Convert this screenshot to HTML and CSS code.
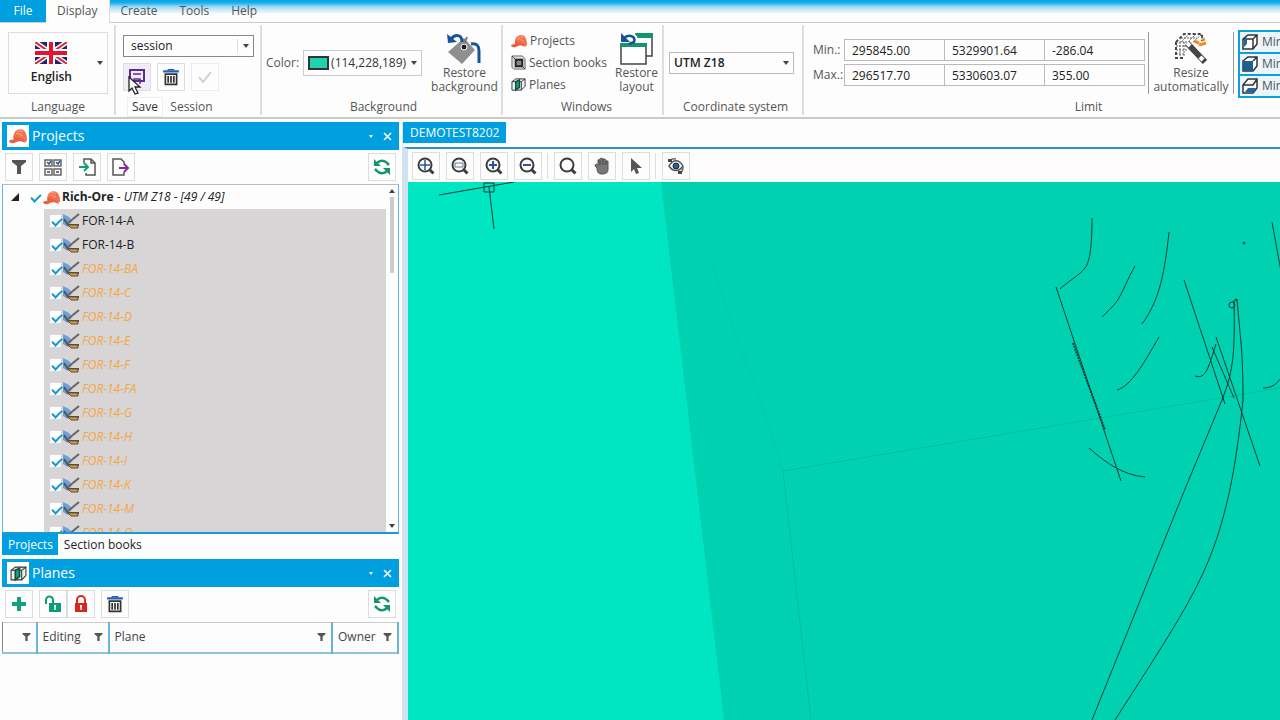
FILE: index.html
```html
<!DOCTYPE html>
<html lang="en">
<head>
    <meta charset="UTF-8">
    <meta name="viewport" content="width=device-width, initial-scale=1.0">
    <title>DEMOTEST8202</title>
    <link rel="stylesheet" href="styles.css">
</head>
<body>

    <!-- Shared icons -->
    <svg class="sprite" aria-hidden="true">
        <symbol id="i-helmet" viewBox="0 0 16 14">
            <path d="M4 8C4 3 7 1 10 1c4 0 6 4 6 10l-1 1-3-1z" fill="#f4714e"/>
            <path d="M4 7l9 3 2 3-3-1c-3-1-5 0-7 1-2 1-4 0-5-1 0-1 1-2 4-2z" fill="#e8603f"/>
            <path d="M7 3c2-1 4-1 5 1M6 5c2-1 4 0 6 2" stroke="#fba285" fill="none"/>
        </symbol>
        <symbol id="i-section" viewBox="0 0 16 16">
            <path d="M1 1h11l3 3v11H3L1 13z" fill="#ddd" stroke="#666"/>
            <path d="M5 5h7v7H5z" fill="#888" stroke="#222" stroke-width="2"/>
            <path d="M1 1l4 4M15 15l-3-3" stroke="#444"/>
        </symbol>
        <symbol id="i-cube" viewBox="0 0 16 16">
            <path d="M1 5l4-3h10v8l-4 4H1z" fill="#e6f3ef" stroke="#333"/>
            <path d="M1 5h10v9M11 5l4-3" fill="none" stroke="#333"/>
            <path d="M5 5l4-2v8l-4 3z" fill="#12a382" stroke="#17493e" stroke-width="1.500"/>
        </symbol>
        <symbol id="i-funnel" viewBox="0 0 16 16">
            <path d="M1 1h14v2l-5 4v8H6V7L1 3z" fill="#555"/>
        </symbol>
        <symbol id="i-check-grid" viewBox="0 0 18 18">
            <path d="M1 2h7v6H1zM10 2h7v6h-7zM1 11h7v6H1zM10 11h7v6h-7z" fill="#fff" stroke="#666" stroke-width="1.500"/>
            <path d="M3 4l2 2 2-3M12 4l2 2 2-3" fill="none" stroke="#235a9c" stroke-width="1.500"/>
            <path d="M3 14h3M12 14h3" stroke="#444" stroke-width="1.500"/>
        </symbol>
        <symbol id="i-import" viewBox="0 0 18 18">
            <path d="M6 5V1h7l4 4v12H8v-2M13 1v4h4" fill="none" stroke="#555" stroke-width="1.500"/>
            <path d="M1 9h8M6 5l4 4-4 4" fill="none" stroke="#119c79" stroke-width="2"/>
        </symbol>
        <symbol id="i-export" viewBox="0 0 18 18">
            <path d="M12 6V4L9 1H1v16h11v-3" fill="none" stroke="#555" stroke-width="1.500"/>
            <path d="M7 10h9M12 6l4 4-4 4" fill="none" stroke="#862a96" stroke-width="2"/>
        </symbol>
        <symbol id="i-refresh" viewBox="0 0 18 18">
            <path d="M3 7a6.500 6.500 0 0 1 11-2l2 2M15 11a6.500 6.500 0 0 1-11 2l-2-2" fill="none" stroke="#14956f" stroke-width="2.500"/>
            <path d="M1 1v7h7zM17 17v-7h-7z" fill="#14956f"/>
        </symbol>
        <symbol id="i-plus" viewBox="0 0 16 16">
            <path d="M8 1v14M1 8h14" stroke="#14a07c" stroke-width="4"/>
        </symbol>
        <symbol id="i-unlock" viewBox="0 0 18 18">
            <path d="M2 9V5a3.500 3.500 0 0 1 7 0v4" fill="none" stroke="#119c79" stroke-width="2"/>
            <path d="M5 8h12v9H5z" fill="#119c79"/>
            <path d="M11 10v5M10 11h2" stroke="#fff" stroke-width="1.500"/>
        </symbol>
        <symbol id="i-lock" viewBox="0 0 18 18">
            <path d="M5 9V5a4 4 0 0 1 8 0v4" fill="none" stroke="#d6281f" stroke-width="2"/>
            <path d="M3 8h12v9H3z" fill="#d6281f"/>
            <path d="M9 10v5M8 11h2" stroke="#fff" stroke-width="1.500"/>
        </symbol>
        <symbol id="i-trash" viewBox="0 0 16 16">
            <path d="M1 3h14" stroke="#1d63b5" stroke-width="2"/>
            <path d="M5 1.500h6" stroke="#1d3f8c"/>
            <path d="M3 5.500h10v9H3zM5.500 7v6M8 7v6M10.500 7v6" fill="none" stroke="#333" stroke-width="1.500"/>
        </symbol>
        <symbol id="i-lens" viewBox="0 0 18 18">
            <circle cx="8" cy="8" r="6.500" fill="none" stroke="#3c3c3c" stroke-width="2"/>
            <path d="M12.500 12.500l4 4" stroke="#3c3c3c" stroke-width="3"/>
        </symbol>
        <symbol id="i-drill" viewBox="0 0 18 18">
            <path d="M1 2l6 3 3 4-4 6-5-3z" fill="#6f9fdb"/>
            <path d="M17 2L6 11" stroke="#666" stroke-width="2"/>
            <path d="M2 7l4 6h11" fill="none" stroke="#555" stroke-width="2"/>
            <path d="M6 13h10v3H9z" fill="#d0a24a" stroke="#5c4a2c"/>
        </symbol>
    </svg>

    <nav class="tabs">
        <a class="tab file" href="#">File</a>
        <a class="tab active" href="#">Display</a>
        <a class="tab" href="#">Create</a>
        <a class="tab" href="#">Tools</a>
        <a class="tab" href="#">Help</a>
    </nav>

    <header class="ribbon">
        <section class="group language">
            <div class="group-body">
                <button class="lang-btn">
                    <span class="lang-name">
                        <svg width="32" height="22" viewBox="0 0 32 22">
                            <path d="M0 0h32v22H0z" fill="#22256e"/>
                            <path d="M0 0l32 22M32 0L0 22" stroke="#fff" stroke-width="5"/>
                            <path d="M0 0l32 22M32 0L0 22" stroke="#e0233c" stroke-width="2"/>
                            <path d="M16 0v22M0 11h32" stroke="#fff" stroke-width="8"/>
                            <path d="M16 0v22M0 11h32" stroke="#e3142c" stroke-width="4"/>
                        </svg>
                        English
                    </span>
                    <span class="caret"></span>
                </button>
            </div>
            <h2>Language</h2>
        </section>

        <section class="group session">
            <div class="group-body stack">
                <div class="select split">
                    <select aria-label="Session"><option>session</option></select>
                    <span class="caret"></span>
                </div>
                <div class="session-buttons">
                    <button class="tool hover save" aria-label="Save">
                        <svg width="18" height="18" viewBox="0 0 18 18">
                            <path d="M2 2h14v11H2z" fill="#f4eef9" stroke="#5b2d94" stroke-width="2"/>
                            <path d="M5 6h8M6 16v-5h6v5" fill="none" stroke="#5b2d94" stroke-width="1.500"/>
                        </svg>
                        <svg class="cursor" width="15" height="20" viewBox="0 0 15 20">
                            <path d="M1 1v14l3-3 3 6 3-1-3-6h5z" fill="#fff" stroke="#222" stroke-width="1.300"/>
                        </svg>
                        <span class="tooltip">Save</span>
                    </button>
                    <button class="tool" aria-label="Delete"><svg width="18" height="18"><use href="#i-trash"/></svg></button>
                    <button class="tool faint" aria-label="Apply" disabled>
                        <svg width="16" height="16" viewBox="0 0 16 16"><path d="M2 8l4 5 8-10" fill="none" stroke="#c3d3cf" stroke-width="2"/></svg>
                    </button>
                </div>
            </div>
            <h2>Session</h2>
        </section>

        <section class="group background">
            <div class="group-body">
                <span class="label">Color:</span>
                <button class="color-btn"><span class="swatch"></span>(114,228,189)<span class="caret"></span></button>
                <button class="big-btn">
                    <svg width="36" height="34" viewBox="0 0 36 34">
                        <path d="M2 20L18 6l11 12-13 14z" fill="#8f8f8f"/>
                        <path d="M17 15L21 5" stroke="#777" stroke-width="2"/>
                        <circle cx="18" cy="15" r="3" fill="#222" stroke="#fff"/>
                        <path d="M25 12c6-1 8 2 8 7v12" fill="none" stroke="#16539b" stroke-width="3"/>
                        <path d="M5 7c4-5 11-5 11 3" fill="none" stroke="#16539b" stroke-width="3"/>
                        <path d="M1 2l1 9 9-1z" fill="#16539b"/>
                    </svg>
                    <span>Restore<br>background</span>
                </button>
            </div>
            <h2>Background</h2>
        </section>

        <section class="group windows">
            <div class="group-body">
                <div class="window-list">
                    <button><svg width="16" height="14"><use href="#i-helmet"/></svg>Projects</button>
                    <button><svg width="15" height="15"><use href="#i-section"/></svg>Section books</button>
                    <button><svg width="15" height="15"><use href="#i-cube"/></svg>Planes</button>
                </div>
                <button class="big-btn">
                    <svg width="36" height="34" viewBox="0 0 36 34">
                        <path d="M16 2h17v22h-6" fill="#fff" stroke="#444" stroke-width="1.500"/>
                        <path d="M17 1h17v5H17z" fill="#14956f"/>
                        <path d="M2 12h25v20H2z" fill="#fff" stroke="#444" stroke-width="1.500"/>
                        <path d="M1 11h27v4H1z" fill="#14956f"/>
                        <path d="M5 6c5-4 12-2 11 4" fill="none" stroke="#fff" stroke-width="6"/>
                        <path d="M5 6c5-4 12-2 10 4l-5 2" fill="none" stroke="#16539b" stroke-width="2.500"/>
                        <path d="M2 1v9h9z" fill="#16539b"/>
                    </svg>
                    <span>Restore<br>layout</span>
                </button>
            </div>
            <h2>Windows</h2>
        </section>

        <section class="group coordinates">
            <div class="group-body">
                <div class="select">
                    <select aria-label="Coordinate system"><option>UTM Z18</option></select>
                    <span class="caret"></span>
                </div>
            </div>
            <h2>Coordinate system</h2>
        </section>

        <section class="group limit">
            <div class="group-body">
                <div class="limits">
                    <div class="limit-row">
                        <span class="label">Min.:</span>
                        <input type="text" value="295845.00" aria-label="Min X">
                        <input type="text" value="5329901.64" aria-label="Min Y">
                        <input type="text" value="-286.04" aria-label="Min Z">
                    </div>
                    <div class="limit-row">
                        <span class="label">Max.:</span>
                        <input type="text" value="296517.70" aria-label="Max X">
                        <input type="text" value="5330603.07" aria-label="Max Y">
                        <input type="text" value="355.00" aria-label="Max Z">
                    </div>
                </div>
                <div class="resize">
                    <button class="big-btn">
                        <svg width="34" height="34" viewBox="0 0 34 34">
                            <path d="M2 10l8-8h18v7M2 10v16h8" fill="none" stroke="#444" stroke-width="2" stroke-dasharray="3 2"/>
                            <path d="M2 10h12M19 10l9-8M2 18h12M10 10v15M7 6h16M15 2l-8 8M22 2l-8 8M6 10v14M2 14h12M2 22h9" fill="none" stroke="#666" stroke-dasharray="2 1"/>
                            <path d="M13 11l18 19" stroke="#444" stroke-width="6"/>
                            <path d="M13 11l3 3M26 25l3 3" stroke="#fff" stroke-width="4"/>
                            <path d="M20 9l5 2M25 13l7-2M28 8l3-1" stroke="#f08a2c" stroke-width="3"/>
                        </svg>
                        <span>Resize<br>automatically</span>
                    </button>
                </div>
                <div class="faces">
                    <button><svg width="16" height="16" viewBox="0 0 16 16"><path d="M1 5l5-4h9v9l-4 5H1zM1 5h10v10M11 5l4-4" fill="#fff" stroke="#333" stroke-width="1.500"/><path d="M2 6l3-3v7l-3 3z" fill="#1c66ab"/></svg>Min. X</button>
                    <button><svg width="16" height="16" viewBox="0 0 16 16"><path d="M1 5l5-4h9v9l-4 5H1zM11 5l4-4" fill="#fff" stroke="#333" stroke-width="1.500"/><path d="M1 5h10v10H1z" fill="#1c5f94"/></svg>Min. Y</button>
                    <button><svg width="16" height="16" viewBox="0 0 16 16"><path d="M1 7l5-6h9v9l-4 5H1zM1 7h10l4-6" fill="#fff" stroke="#333" stroke-width="1.500"/><path d="M3 14l3-4h8l-3 4z" fill="#1c66ab"/></svg>Min. Z</button>
                </div>
            </div>
            <h2>Limit</h2>
        </section>
    </header>

    <main class="workspace">
        <aside class="sidebar">
            <section class="panel projects">
                <div class="panel-title">
                    <span class="title-icon"><svg width="18" height="16"><use href="#i-helmet"/></svg></span>
                    <h3>Projects</h3>
                    <button class="title-btn" aria-label="Options"><span class="caret"></span></button>
                    <button class="title-btn" aria-label="Close"><svg width="9" height="9" viewBox="0 0 9 9"><path d="M1 1l7 7M8 1L1 8" stroke="#fff" stroke-width="1.500"/></svg></button>
                </div>
                <div class="toolbar">
                    <button class="tool" aria-label="Filter"><svg width="16" height="16"><use href="#i-funnel"/></svg></button>
                    <button class="tool" aria-label="Check all"><svg width="18" height="18"><use href="#i-check-grid"/></svg></button>
                    <button class="tool" aria-label="Import"><svg width="18" height="18"><use href="#i-import"/></svg></button>
                    <button class="tool" aria-label="Export"><svg width="18" height="18"><use href="#i-export"/></svg></button>
                    <button class="tool right" aria-label="Refresh"><svg width="18" height="18"><use href="#i-refresh"/></svg></button>
                </div>
                <div class="tree">
                    <div class="tree-view">
                        <label class="tree-root">
                            <svg width="8" height="8" viewBox="0 0 8 8"><path d="M8 0v8H0z" fill="#222"/></svg>
                            <input type="checkbox" checked>
                            <svg width="17" height="15"><use href="#i-helmet"/></svg>
                            <span><b>Rich-Ore</b> - <i>UTM Z18 - [49 / 49]</i></span>
                        </label>
                        <div id="holes"></div>
                    </div>
                    <div class="scrollbar">
                        <span class="caret up"></span>
                        <span class="thumb"></span>
                        <span class="caret"></span>
                    </div>
                </div>
                <div class="panel-tabs">
                    <a class="active" href="#">Projects</a>
                    <a href="#">Section books</a>
                </div>
            </section>

            <section class="panel planes">
                <div class="panel-title">
                    <span class="title-icon"><svg width="17" height="17"><use href="#i-cube"/></svg></span>
                    <h3>Planes</h3>
                    <button class="title-btn" aria-label="Options"><span class="caret"></span></button>
                    <button class="title-btn" aria-label="Close"><svg width="9" height="9" viewBox="0 0 9 9"><path d="M1 1l7 7M8 1L1 8" stroke="#fff" stroke-width="1.500"/></svg></button>
                </div>
                <div class="toolbar">
                    <button class="tool" aria-label="Add"><svg width="16" height="16"><use href="#i-plus"/></svg></button>
                    <div class="pair">
                        <button class="tool" aria-label="Unlock"><svg width="18" height="18"><use href="#i-unlock"/></svg></button>
                        <button class="tool" aria-label="Lock"><svg width="18" height="18"><use href="#i-lock"/></svg></button>
                    </div>
                    <button class="tool" aria-label="Delete"><svg width="18" height="18"><use href="#i-trash"/></svg></button>
                    <button class="tool right" aria-label="Refresh"><svg width="18" height="18"><use href="#i-refresh"/></svg></button>
                </div>
                <table>
                    <thead>
                        <tr>
                            <th class="col-mark"><div><span></span><svg width="9" height="10"><use href="#i-funnel"/></svg></div></th>
                            <th class="col-editing"><div>Editing<svg width="9" height="10"><use href="#i-funnel"/></svg></div></th>
                            <th><div>Plane<svg width="9" height="10"><use href="#i-funnel"/></svg></div></th>
                            <th class="col-owner"><div>Owner<svg width="9" height="10"><use href="#i-funnel"/></svg></div></th>
                        </tr>
                    </thead>
                </table>
            </section>
        </aside>

        <section class="document">
            <div class="doc-tabs"><a href="#">DEMOTEST8202</a></div>
            <div class="viewer">
                <div class="toolbar">
                    <button class="tool" aria-label="Zoom extents"><svg width="18" height="18"><use href="#i-lens"/><path d="M8 3v10M3 8h10" stroke="#2a559c" stroke-width="1.500"/></svg></button>
                    <button class="tool" aria-label="Zoom window"><svg width="18" height="18"><use href="#i-lens"/><path d="M4 6h8v4H4z" fill="none" stroke="#62789c"/></svg></button>
                    <button class="tool" aria-label="Zoom in"><svg width="18" height="18"><use href="#i-lens"/><path d="M8 4v8M4 8h8" stroke="#2a559c" stroke-width="2"/></svg></button>
                    <button class="tool" aria-label="Zoom out"><svg width="18" height="18"><use href="#i-lens"/><path d="M4 8h8" stroke="#2a559c" stroke-width="2"/></svg></button>
                    <span class="divider"></span>
                    <button class="tool" aria-label="Zoom"><svg width="18" height="18"><use href="#i-lens"/></svg></button>
                    <button class="tool" aria-label="Pan">
                        <svg width="16" height="18" viewBox="0 0 16 18"><path d="M3 11L1 9l1-2 2 1V3l2-1 1-1 2 1 2 0 1 2 2 0v8c0 4-2 5-6 5s-5-2-5-6z" fill="#777" stroke="#555"/><path d="M6 3v5M9 2v6M12 4v4" stroke="#444"/></svg>
                    </button>
                    <button class="tool" aria-label="Select">
                        <svg width="14" height="18" viewBox="0 0 14 18"><path d="M2 1v14l3-3 2 5 3-1-2-5h5z" fill="#555"/></svg>
                    </button>
                    <span class="divider"></span>
                    <button class="tool" aria-label="Orbit">
                        <svg width="18" height="18" viewBox="0 0 18 18">
                            <path d="M2 9c4-7 10-7 14 0-4 6-10 6-14 0z" fill="none" stroke="#555" stroke-width="1.500"/>
                            <circle cx="9" cy="9" r="3" fill="#25609c" stroke="#222"/>
                            <path d="M2 4c2-2 4-3 7-2M16 10c0 3-1 5-3 6" fill="none" stroke="#666" stroke-width="1.500"/>
                            <path d="M1 2h4v3H1zM11 14h4v3h-4z" fill="#444"/>
                        </svg>
                    </button>
                </div>

                <svg class="scene" viewBox="408 182 872 538" preserveAspectRatio="xMinYMin slice">
                    <path d="M661 182H1280V720H724z" fill="#00d2b1"/>
                    <g class="edges">
                        <path d="M783 471L1280 388"/>
                        <path d="M783 471L811 720"/>
                        <path d="M712 262L783 471" opacity="0.400"/>
                    </g>
                    <g class="holes">
                        <!-- origin marker -->
                        <path d="M439 195L514 182M489 187L494 229M484 183h10v9h-10z"/>
                        <!-- drill holes -->
                        <path d="M1092 218C1092 245 1090 262 1085 268C1080 275 1067 282 1060 289"/>
                        <path d="M1056 287L1121 481"/>
                        <path d="M1073 343L1105 430" stroke-width="2" stroke-dasharray="2 1"/>
                        <path d="M1135 266C1128 278 1122 294 1117 301C1112 308 1107 312 1102 317"/>
                        <path d="M1169 232C1165 270 1160 300 1142 324"/>
                        <path d="M1159 337C1144 363 1131 386 1117 390"/>
                        <path d="M1089 448C1105 462 1122 475 1145 477"/>
                        <path d="M1184 280L1225 404"/>
                        <path d="M1216 337L1260 466"/>
                        <path d="M1212 347L1234 398"/>
                        <path d="M1216 344C1209 366 1206 380 1195 376"/>
                        <path d="M1234 300C1235 350 1234 370 1222 400L1185 489L1092 720"/>
                        <path d="M1237 299C1240 335 1243 350 1243 400C1240 430 1235 465 1230 489C1212 572 1190 603 1115 720"/>
                        <path d="M1272 222L1282 277"/>
                        <path d="M1263 388C1273 388 1276 384 1282 377"/>
                        <circle cx="1232" cy="305" r="3"/>
                        <circle cx="1236" cy="300" r="1"/>
                        <circle cx="1244" cy="243" r="1"/>
                    </g>
                </svg>
            </div>
        </section>
    </main>

    <script>
        const holes = ['A', 'B', 'BA', 'C', 'D', 'E', 'F', 'FA', 'G', 'H', 'I', 'K', 'M', 'O'];
        const loaded = ['A', 'B'];

        // Fill the project tree
        const list = document.getElementById('holes');
        holes.forEach(hole => {
            const row = document.createElement('label');
            row.className = loaded.includes(hole) ? 'hole' : 'hole pending';
            row.innerHTML = `
                <input type="checkbox" checked>
                <svg width="18" height="18"><use href="#i-drill"/></svg>
                <span>FOR-14-${hole}</span>
            `;
            list.appendChild(row);
        });
    </script>

</body>
</html>
```

FILE: styles.css
```css
* {
    box-sizing: border-box;
}

body {
    margin: 0;
    height: 100vh;
    display: flex;
    flex-direction: column;
    overflow: hidden;
    background-color: #fdfdfd;
    font-family: "Open Sans", "Noto Sans", sans-serif;
    font-size: 12px;
    line-height: 14px;
    color: #555;
}

button, input, select {
    font: inherit;
    color: inherit;
}

button {
    display: flex;
    align-items: center;
    justify-content: center;
    padding: 0;
    border: none;
    background: none;
}

a {
    color: inherit;
    text-decoration: none;
}

h2, h3 {
    margin: 0;
    font-size: 12px;
    font-weight: normal;
    text-align: center;
}

svg {
    flex: none;
}

.sprite {
    position: absolute;
    width: 0;
    height: 0;
}

.caret {
    flex: none;
    width: 0;
    border: 3px solid transparent;
    border-top: 4px solid #444;
    border-bottom: none;
}

.caret.up {
    border-top: none;
    border-bottom: 4px solid #444;
}

/* Ribbon */

.tabs {
    display: flex;
    flex: none;
    height: 23px;
    background: linear-gradient(#00a6e8 0, #1fb0ea 3px, #a5dcf5 7px, #fdfdfd 14px);
    border-bottom: 1px solid #ccc;
}

.tab {
    padding: 4px 11px;
}

.tab.file {
    width: 46px;
    padding: 4px 0;
    text-align: center;
    color: #fff;
    background-color: #009fe0;
}

.tab.active {
    height: 23px;
    background-color: #fdfdfd;
    border-right: 1px solid #ddd;
}

.ribbon {
    display: flex;
    flex: none;
    height: 96px;
    padding: 2px 0;
    overflow: hidden;
    border-bottom: 2px solid #c9c9c9;
}

.group {
    display: flex;
    flex-direction: column;
    flex: none;
    border-right: 2px solid #ddd;
}

.group h2 {
    height: 15px;
}

.group-body {
    display: flex;
    align-items: center;
    flex: 1;
}

.language {
    width: 116px;
    padding: 0 6px 0 8px;
}

.session {
    width: 146px;
    padding-left: 7px;
}

.background {
    width: 241px;
    padding-left: 4px;
}

.windows {
    width: 161px;
    padding-left: 8px;
}

.coordinates {
    width: 140px;
    padding-left: 5px;
}

.limit {
    width: 562px;
    padding-left: 9px;
}

.lang-btn {
    width: 100px;
    height: 62px;
    justify-content: flex-end;
    gap: 25px;
    padding-right: 4px;
    border: 1px solid #ddd;
    font-weight: 600;
    color: #222;
}

.lang-name {
    display: flex;
    flex-direction: column;
    align-items: center;
    gap: 6px;
}

.stack {
    flex-direction: column;
    align-items: flex-start;
    justify-content: center;
    gap: 6px;
}

.select {
    display: flex;
    align-items: center;
    width: 125px;
    height: 22px;
    padding-right: 4px;
    border: 1px solid #bbb;
    font-weight: 600;
    color: #222;
}

.select select {
    flex: 1;
    padding: 0 4px;
    border: none;
    background: none;
    appearance: none;
}

.select.split {
    width: 131px;
    border-color: #888;
    font-weight: 500;
}

.split select {
    margin-right: 5px;
    padding-left: 7px;
    border-right: 1px solid #ddd;
}

.session-buttons {
    display: flex;
    gap: 6px;
}

.tool {
    width: 28px;
    height: 28px;
    border: 1px solid #ddd;
}

.tool.hover {
    background-color: #f1ecf6;
}

.tool.faint {
    border-color: #eee;
}

.save {
    position: relative;
}

.cursor {
    position: absolute;
    left: 4px;
    top: 12px;
}

.tooltip {
    position: absolute;
    left: 3px;
    top: 33px;
    padding: 2px 4px;
    background-color: #fff;
    border: 1px solid #eee;
    color: #333;
}

.color-btn {
    width: 119px;
    height: 26px;
    justify-content: flex-start;
    gap: 2px;
    margin: 0 9px 0 4px;
    padding: 0 4px;
    border: 1px solid #ccc;
    color: #333;
}

.color-btn .caret {
    margin-left: auto;
}

.swatch {
    width: 21px;
    height: 14px;
    background-color: #1fd3ac;
    border: 2px solid #333;
}

.big-btn {
    flex-direction: column;
}

.window-list {
    display: flex;
    flex-direction: column;
    width: 104px;
    gap: 8px;
}

.window-list button {
    justify-content: flex-start;
    gap: 3px;
    height: 14px;
}

.limits {
    display: flex;
    flex-direction: column;
    gap: 3px;
}

.limit-row {
    display: flex;
    align-items: center;
}

.limit-row .label {
    width: 31px;
}

.limit-row input {
    width: 101px;
    height: 22px;
    margin-right: -1px;
    padding: 0 7px;
    border: 1px solid #bbb;
    background: none;
    color: #222;
}

.resize {
    display: flex;
    justify-content: center;
    width: 86px;
    margin-left: 4px;
    border: solid #999;
    border-width: 0 1px;
}

.faces {
    width: 124px;
    padding-left: 4px;
}

.faces button {
    width: 100%;
    height: 24px;
    margin-bottom: -2px;
    justify-content: flex-start;
    gap: 4px;
    padding-left: 2px;
    border: 2px solid #0fa0dc;
    background-color: #eaf6fc;
}

/* Workspace */

.workspace {
    display: flex;
    flex: 1;
    min-height: 0;
    padding-top: 3px;
}

.sidebar {
    display: grid;
    grid-template-rows: 1fr 161px;
    gap: 4px;
    flex: none;
    width: 403px;
    padding: 0 3px 0 2px;
    border-right: 1px solid #cfe4f2;
}

.panel {
    display: flex;
    flex-direction: column;
    min-height: 0;
}

.panel-title {
    display: flex;
    align-items: center;
    flex: none;
    height: 28px;
    padding: 0 4px 0 5px;
    background-color: #009fe0;
    color: #fff;
}

.title-icon {
    display: flex;
    align-items: center;
    justify-content: center;
    width: 22px;
    height: 22px;
    background-color: #fff;
}

.panel-title h3 {
    flex: 1;
    padding-left: 3px;
    font-size: 14px;
    text-align: left;
}

.title-btn {
    width: 16px;
    height: 16px;
}

.title-btn .caret {
    border-width: 3px 2px 0;
    border-top-color: #fff;
}

.toolbar {
    display: flex;
    align-items: center;
    flex: none;
    gap: 6px;
    height: 33px;
    padding: 0 3px;
}

.toolbar .right {
    margin-left: auto;
}

.pair {
    display: flex;
}

.tree {
    display: flex;
    flex: 1;
    min-height: 0;
    margin-top: 1px;
    border: 1px solid #5cb8e0;
    border-top-color: #bbb;
    border-bottom: 2px solid #179bd0;
    color: #222;
}

.tree-view {
    flex: 1;
    overflow: hidden;
}

.tree input {
    flex: none;
    position: relative;
    width: 11px;
    height: 12px;
    margin: 0;
    background-color: #fff;
    appearance: none;
}

.tree input:checked::before {
    content: "";
    position: absolute;
    left: 4px;
    top: 1px;
    width: 4px;
    height: 8px;
    border: solid #149bc8;
    border-width: 0 2px 2px 0;
    transform: rotate(45deg);
}

.tree-root {
    display: flex;
    align-items: center;
    height: 24px;
    padding-left: 8px;
}

.tree-root input {
    margin: 0 3px 0 10px;
}

.tree-root span {
    padding-left: 2px;
}

#holes {
    margin-left: 41px;
    background-color: #d8d5d6;
}

.hole {
    display: flex;
    align-items: center;
    height: 24px;
    padding-left: 6px;
}

.hole svg {
    margin-left: 1px;
}

.hole span {
    padding-left: 2px;
}

.hole.pending {
    font-style: italic;
    color: #f5a742;
}

.scrollbar {
    display: flex;
    flex-direction: column;
    align-items: center;
    width: 12px;
    padding: 4px 0;
}

.thumb {
    width: 4px;
    height: 76px;
    margin: 4px 0 auto;
    background-color: #ccc;
}

.panel-tabs {
    display: flex;
    flex: none;
    height: 21px;
    color: #222;
}

.panel-tabs a {
    padding: 4px 5px 3px 6px;
    font-weight: 500;
}

.panel-tabs .active {
    background-color: #009fe0;
    color: #fff;
}

.planes table {
    width: 100%;
    table-layout: fixed;
    border-collapse: collapse;
    margin-top: 2px;
    border-top: 1px solid #ccc;
    border-bottom: 2px solid #8fc3dd;
}

.planes th {
    height: 30px;
    padding: 0 5px;
    border-right: 2px solid #6ab4d9;
    font-weight: normal;
    color: #444;
}

.planes th div {
    display: flex;
    align-items: center;
    justify-content: space-between;
}

.col-mark {
    width: 34px;
    border-left: 1px solid #888;
}

.col-editing {
    width: 72px;
}

.col-owner {
    width: 66px;
}

/* Document */

.document {
    display: flex;
    flex-direction: column;
    flex: 1;
    min-width: 0;
}

.doc-tabs {
    display: flex;
    flex: none;
    height: 25px;
    padding-bottom: 4px;
}

.doc-tabs a {
    padding: 4px 7px 3px;
    background-color: #009fe0;
    color: #fff;
}

.viewer {
    display: flex;
    flex-direction: column;
    flex: 1;
    min-height: 0;
    border-top: 2px solid #2b93bd;
    border-left: 5px solid #d3e2f1;
}

.viewer .toolbar {
    padding-left: 4px;
}

.divider {
    width: 1px;
    height: 26px;
    background-color: #ddd;
    margin-left: -1px;
}

.scene {
    flex: 1;
    width: 100%;
    min-height: 0;
    background-color: #00e6c3;
}

.edges {
    fill: none;
    stroke: #00bc9f;
}

.holes {
    fill: none;
    stroke: #093d34;
}
```
